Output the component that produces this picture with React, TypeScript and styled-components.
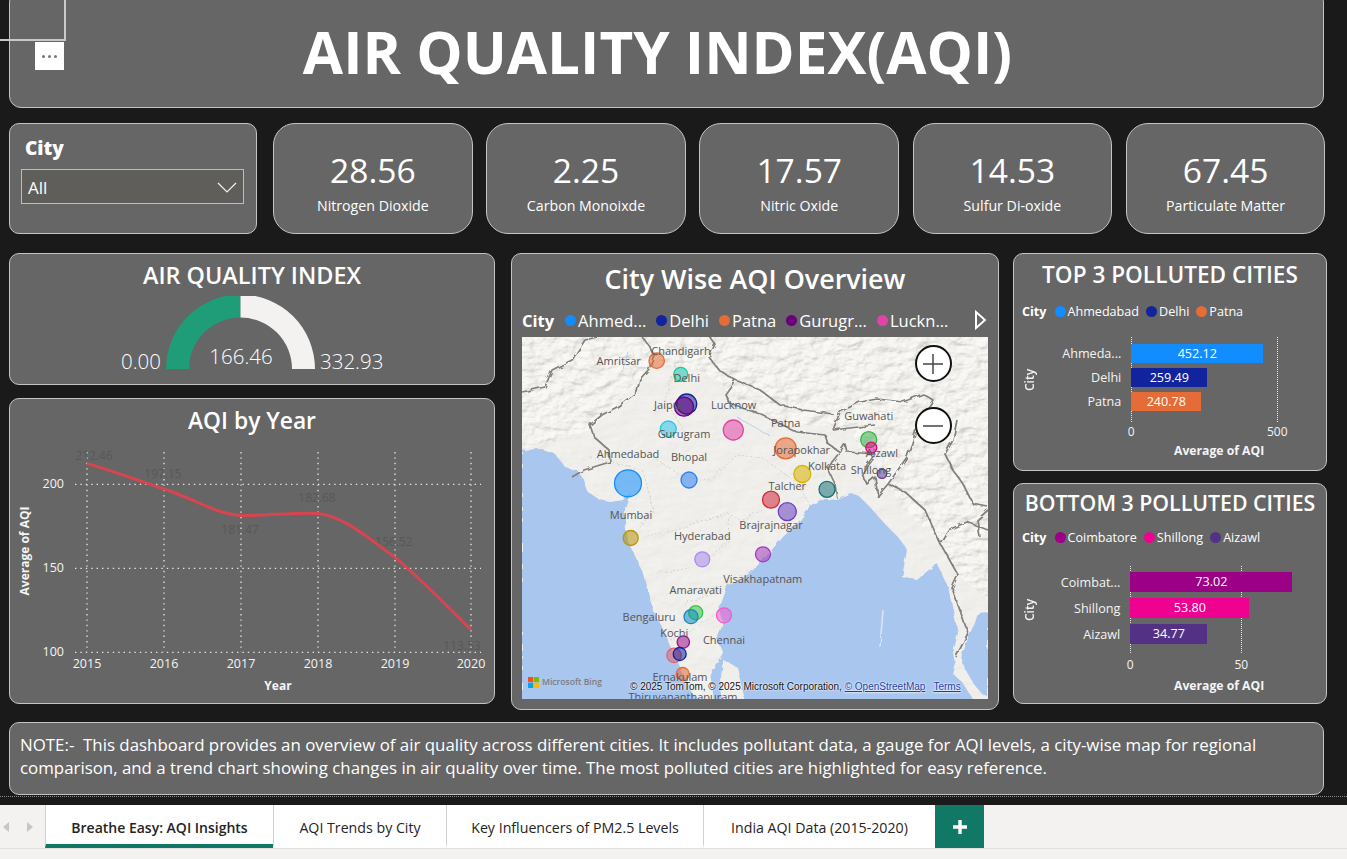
import styled, { createGlobalStyle } from 'styled-components';

const GlobalStyle = createGlobalStyle`
  html, body { margin: 0; padding: 0; background: #1a1a1a; }
  body { font-family: "Open Sans", "Noto Sans", sans-serif; color: #fff; overflow: hidden; }
  * { box-sizing: border-box; }
`;

const Page = styled.div`
  width: 1347px;
  height: 859px;
  display: flex;
  flex-direction: column;
  overflow: hidden;
  position: relative;
`;

const Canvas = styled.div`
  height: 805px;
  padding: 0 0 0 9px;
  display: flex;
  flex-direction: column;
`;

const Panel = styled.div<{ $radius?: number }>`
  background: #666;
  border: 1px solid #c4c4c4;
  border-radius: ${({ $radius }) => $radius ?? 10}px;
`;

const Header = styled(Panel)`
  width: 1315px;
  height: 118px;
  margin-top: -10px;
  padding: 6px 18px 0 0;
  display: flex;
  align-items: center;
  justify-content: center;
  border-radius: 12px;
`;

const MainTitle = styled.h1`
  margin: 0;
  font-size: 58.4px;
  font-weight: 700;
  line-height: 1;
`;

const FocusBox = styled.div`
  position: absolute;
  left: -2px;
  top: -2px;
  width: 68px;
  height: 43px;
  border: 2px solid #c9c9c9;
`;

const MoreButton = styled.div`
  position: absolute;
  left: 35px;
  top: 42px;
  width: 29px;
  height: 28px;
  background: #fff;
  display: flex;
  align-items: center;
  justify-content: center;
  gap: 3px;
`;

const MoreDot = styled.span`
  width: 3px;
  height: 3px;
  border-radius: 50%;
  background: #777;
`;

const StatRow = styled.div`
  display: flex;
  height: 111px;
  margin-top: 15px;
  gap: 13.5px;
`;

const Slicer = styled(Panel)`
  width: 248px;
  margin-right: 2.5px;
  padding: 11px 12px 11px 11px;
`;

const SlicerLabel = styled.div`
  font-size: 19px;
  font-weight: 800;
  line-height: 26px;
  padding-left: 4px;
`;

const SlicerSelect = styled.div`
  margin-top: 8px;
  height: 35px;
  background: #5f5e5b;
  border: 1px solid #bdbdbd;
  display: flex;
  align-items: center;
  justify-content: space-between;
  padding: 2px 6px 0 6px;
  font-size: 17px;
`;

const StatCard = styled(Panel)`
  width: 199.7px;
  border-radius: 22px;
  display: flex;
  flex-direction: column;
  align-items: center;
  padding-top: 24px;
`;

const StatValue = styled.div`
  font-size: 33.6px;
  line-height: 44px;
  font-weight: 400;
`;

const StatLabel = styled.div`
  font-size: 14.2px;
  line-height: 20px;
  margin-top: 4px;
`;

const MainRow = styled.div`
  display: flex;
  height: 457px;
  margin-top: 19px;
`;

const Column = styled.div<{ $width: number; $gap: number; $after: number }>`
  width: ${({ $width }) => $width}px;
  margin-right: ${({ $after }) => $after}px;
  display: flex;
  flex-direction: column;
  gap: ${({ $gap }) => $gap}px;
`;

const ChartPanel = styled(Panel)<{ $height: number }>`
  height: ${({ $height }) => $height}px;
  display: flex;
  flex-direction: column;
  overflow: hidden;
`;

const PanelTitle = styled.div<{ $size: number; $height: number; $top?: number }>`
  font-size: ${({ $size }) => $size}px;
  line-height: ${({ $height }) => $height}px;
  margin-top: ${({ $top }) => $top ?? 0}px;
  font-weight: 600;
  text-align: center;
  white-space: nowrap;
`;

const ChartSvg = styled.svg`
  display: block;
  flex: none;
`;

const AxisText = styled.text`
  font-family: "Open Sans", sans-serif;
  font-size: 12.5px;
  fill: #f4f4f4;
`;

const AxisName = styled.text`
  font-family: "Open Sans", sans-serif;
  font-size: 12px;
  font-weight: 700;
  fill: #f4f4f4;
`;

const GhostLabel = styled.text`
  font-family: "Open Sans", sans-serif;
  font-size: 12px;
  fill: #585858;
`;

const GaugeText = styled.text`
  font-family: "Open Sans", sans-serif;
  font-size: 20.5px;
  font-weight: 300;
  fill: #fff;
`;

const MapLegend = styled.div`
  display: flex;
  align-items: center;
  height: 26px;
  margin: 8px 0 4px 10px;
  font-size: 16.5px;
  white-space: nowrap;
`;

const MapFrame = styled.div`
  width: 466px;
  height: 362px;
  margin-left: 10px;
  position: relative;
  overflow: hidden;
`;

const MapCanvas = styled.svg`
  display: block;
`;

const MapLabel = styled.text`
  font-family: "Open Sans", sans-serif;
  font-size: 11px;
  fill: #555;
  text-anchor: middle;
`;

const ZoomButton = styled.div<{ $top: number }>`
  position: absolute;
  left: 392.5px;
  top: ${({ $top }) => $top}px;
  width: 37px;
  height: 37px;
  border-radius: 50%;
  background: #fff;
  border: 2px solid #111;
  display: flex;
  align-items: center;
  justify-content: center;
`;

const BingMark = styled.div`
  position: absolute;
  left: 6px;
  bottom: 11px;
  display: flex;
  align-items: center;
  gap: 3px;
  font-size: 8.6px;
  font-weight: 600;
  color: #7c7c7c;
`;

const Copyright = styled.div`
  position: absolute;
  left: 108px;
  bottom: 7px;
  font-family: "Liberation Sans", sans-serif;
  font-size: 10px;
  color: #111;
  white-space: nowrap;
  text-shadow: 0 0 2px #fff, 0 0 2px #fff;
`;

const MapLink = styled.span<{ $left?: number }>`
  color: #1b3fa8;
  text-decoration: underline;
  margin-left: ${({ $left }) => $left ?? 0}px;
`;

const LegendRow = styled.div<{ $top: number }>`
  display: flex;
  align-items: center;
  height: 18px;
  margin: ${({ $top }) => $top}px 0 0 8px;
  font-size: 12.6px;
  white-space: nowrap;
`;

const LegendName = styled.span<{ $mr: number }>`
  font-weight: 700;
  margin-right: ${({ $mr }) => $mr}px;
`;

const LegendDot = styled.span<{ $color: string; $size: number; $ml?: number }>`
  width: ${({ $size }) => $size}px;
  height: ${({ $size }) => $size}px;
  border-radius: 50%;
  background: ${({ $color }) => $color};
  margin-right: 2px;
  margin-left: ${({ $ml }) => $ml ?? 0}px;
  flex: none;
`;

const BarLayout = styled.div<{ $top: number; $plotHeight: number; $labelCol: number }>`
  display: grid;
  grid-template-columns: 16px ${({ $labelCol }) => $labelCol}px 1fr;
  grid-template-rows: ${({ $plotHeight }) => $plotHeight}px;
  margin: ${({ $top }) => $top}px 0 0 7px;
`;

const YName = styled.div`
  writing-mode: vertical-rl;
  transform: rotate(180deg);
  margin-right: 2px;
  font-size: 12px;
  font-weight: 600;
  text-align: center;
  color: #f4f4f4;
`;

const BarLabels = styled.div<{ $pt: number; $pitch: number }>`
  display: flex;
  flex-direction: column;
  align-items: flex-end;
  padding: ${({ $pt }) => $pt}px 10px 0 0;
  font-size: 12.6px;
  color: #f4f4f4;
  & > div { height: ${({ $pitch }) => $pitch}px; line-height: ${({ $pitch }) => $pitch - 5}px; }
`;

const Plot = styled.div<{ $pt: number; $gap: number }>`
  position: relative;
  display: flex;
  flex-direction: column;
  gap: ${({ $gap }) => $gap}px;
  padding-top: ${({ $pt }) => $pt}px;
`;

const GridLine = styled.div<{ $left: number }>`
  position: absolute;
  top: 0;
  bottom: 0;
  left: ${({ $left }) => $left}px;
  border-left: 1px dotted #e8e8e8;
`;

const Bar = styled.div<{ $color: string; $h: number }>`
  position: relative;
  height: ${({ $h }) => $h}px;
  background: ${({ $color }) => $color};
  font-size: 12.6px;
  line-height: ${({ $h }) => $h}px;
  text-align: center;
`;

const TickRow = styled.div<{ $left: number; $top: number; $gap: number }>`
  display: flex;
  gap: ${({ $gap }) => $gap}px;
  margin: ${({ $top }) => $top}px 0 0 ${({ $left }) => $left}px;
  font-size: 12px;
  line-height: 18px;
  color: #f4f4f4;
`;

const Tick = styled.div`
  width: 40px;
  text-align: center;
`;

const BarAxisName = styled.div<{ $top: number }>`
  margin: ${({ $top }) => $top}px 0 0 160px;
  font-size: 12.2px;
  font-weight: 700;
  line-height: 18px;
  color: #f4f4f4;
`;

const NotePanel = styled(Panel)`
  width: 1315px;
  height: 73px;
  margin-top: 12px;
  padding: 10px 10px;
  font-size: 16.87px;
  line-height: 23px;
  white-space: pre-wrap;
`;

const DottedLine = styled.div`
  margin: 1px 0 0 -9px;
  border-top: 1px dotted #8c8c8c;
`;

const TabBar = styled.div`
  flex: 1;
  background: #f3f2f1;
  display: flex;
  flex-direction: column;
`;

const TabStrip = styled.div`
  height: 44px;
  display: flex;
  border-bottom: 1px solid #e1dfdd;
`;

const TabNav = styled.div`
  width: 45px;
  display: flex;
  align-items: center;
  justify-content: space-between;
  padding: 0 11px 0 2px;
`;

const Tab = styled.div<{ $width: number; $active?: boolean }>`
  width: ${({ $width }) => $width}px;
  background: #fff;
  border-left: 1px solid #d2d0ce;
  border-bottom: 4px solid ${({ $active }) => ($active ? '#117865' : '#fff')};
  display: flex;
  align-items: center;
  justify-content: center;
  padding-top: 5px;
  font-size: ${({ $active }) => ($active ? 14 : 14.2)}px;
  font-weight: ${({ $active }) => ($active ? 600 : 400)};
  color: #252423;
  white-space: nowrap;
`;

const AddTab = styled.div`
  width: 49px;
  background: #117865;
  display: flex;
  align-items: center;
  justify-content: center;
`;

const mapLegend = [
  { name: 'Ahmed...', color: '#118dff', ml: 0 },
  { name: 'Delhi', color: '#12239e', ml: 10 },
  { name: 'Patna', color: '#e66c37', ml: 10 },
  { name: 'Gurugr...', color: '#6b007b', ml: 10 },
  { name: 'Luckn...', color: '#e044a7', ml: 10 },
];

const bubbles = [
  { x: 656.7, y: 360.7, r: 7.7, c: '#e66c37' },
  { x: 680.7, y: 374.3, r: 7, c: '#1ac9a8' },
  { x: 686.7, y: 404, r: 10, c: '#12239e' },
  { x: 684, y: 406.7, r: 9.5, c: '#6b007b' },
  { x: 668.3, y: 429, r: 8, c: '#2bc4e8' },
  { x: 733.3, y: 430, r: 10, c: '#e044a7' },
  { x: 785.7, y: 448.3, r: 10.5, c: '#e66c37' },
  { x: 802.3, y: 474, r: 8.5, c: '#d9b300' },
  { x: 868.7, y: 439.7, r: 8, c: '#37b34a' },
  { x: 871.3, y: 447.7, r: 5.5, c: '#e6007e' },
  { x: 882, y: 473.7, r: 4.7, c: '#5b3a8e' },
  { x: 628, y: 483.3, r: 13.5, c: '#118dff' },
  { x: 689, y: 480, r: 8, c: '#2a80f0' },
  { x: 827, y: 489.3, r: 8, c: '#197278' },
  { x: 771, y: 499.7, r: 8.5, c: '#d1283c' },
  { x: 787.3, y: 511.7, r: 9, c: '#6a3fc0' },
  { x: 630.7, y: 538, r: 7.5, c: '#b8960c' },
  { x: 702.3, y: 559.3, r: 7.5, c: '#a78bf0' },
  { x: 763, y: 554.3, r: 7.5, c: '#a33bb8' },
  { x: 695.7, y: 612.7, r: 7, c: '#37c44a' },
  { x: 691, y: 616.7, r: 7, c: '#118dbf' },
  { x: 724, y: 615.3, r: 7.5, c: '#f05ccc' },
  { x: 683.3, y: 642, r: 6.2, c: '#9b0e8c' },
  { x: 674, y: 655.3, r: 7.2, c: '#e8606c' },
  { x: 679.7, y: 654, r: 6.5, c: '#12239e' },
  { x: 682.7, y: 674, r: 6.5, c: '#e66c37' },
];

const cityLabels = [
  { t: 'Amritsar', x: 618.7, y: 365 },
  { t: 'Chandigarh', x: 681, y: 354.7 },
  { t: 'Delhi', x: 686.7, y: 382 },
  { t: 'Jaipur', x: 669, y: 408.7 },
  { t: 'Lucknow', x: 733.7, y: 408.7 },
  { t: 'Patna', x: 785.7, y: 427 },
  { t: 'Guwahati', x: 868.7, y: 419.7 },
  { t: 'Gurugram', x: 684, y: 438 },
  { t: 'Ahmedabad', x: 628, y: 458 },
  { t: 'Bhopal', x: 689, y: 460.7 },
  { t: 'Jorapokhar', x: 801.7, y: 454 },
  { t: 'Aizawl', x: 882, y: 457 },
  { t: 'Kolkata', x: 827, y: 470 },
  { t: 'Shillong', x: 871, y: 473.7 },
  { t: 'Talcher', x: 787.3, y: 490 },
  { t: 'Mumbai', x: 631, y: 518.7 },
  { t: 'Brajrajnagar', x: 771, y: 529 },
  { t: 'Hyderabad', x: 702.3, y: 540 },
  { t: 'Visakhapatnam', x: 762.7, y: 583 },
  { t: 'Amaravati', x: 695.7, y: 594 },
  { t: 'Bengaluru', x: 649, y: 620.7 },
  { t: 'Kochi', x: 674.3, y: 636.7 },
  { t: 'Chennai', x: 724, y: 644 },
  { t: 'Ernakulam', x: 680, y: 681.3 },
  { t: 'Thiruvananthapuram', x: 683, y: 700.7 },
];

// map outlines traced from the screenshot, in page coordinates
const seaPath =
  'M522 450 L542 449 L555 454 L565 467 L577 470 L584 480 L588 492 L600 500 L610 502 L623 500 L631 492 L625 507 L625 520 L627 540 L642 570 L653 610 L668 640 L680 667 L692 693 L697 700 L714 700 L710 673 L723 653 L717 640 L723 623 L719 610 L727 587 L750 573 L763 560 L783 537 L797 524 L810 507 L825 499 L837 500 L852 494 L860 497 L870 507 L885 524 L898 537 L907 550 L902 577 L917 580 L937 563 L943 575 L948 587 L953 610 L958 633 L953 653 L955 663 L952 673 L963 683 L973 700 L522 700 Z';
const eastSeaPath = 'M988 612 L978 613 L975 623 L969 635 L963 653 L962 663 L973 683 L983 695 L988 697 Z';
const lankaPath = 'M723 660 L737 667 L745 700 L722 700 L721 677 Z';
const hillsPath =
  'M522 337 L988 337 L988 600 L958 575 L940 543 L900 505 L885 480 L860 450 L850 428 L800 425 L760 412 L730 395 L705 372 L650 360 L640 380 L610 412 L590 430 L560 440 L522 450 Z';
const borders = [
  'M597 337 L585 340 L572 360 L552 370 L545 387 L522 392',
  'M642 337 L650 347 L654 355 L649 369 L640 379 L637 392 L617 407 L602 415 L590 425 L594 437 L609 450 L610 462 L600 465 L584 470 L572 477',
  'M710 337 L715 344 L709 357 L719 370 L735 380 L725 394 L730 404 L760 414 L797 432 L825 435 L827 437',
  'M735 380 L760 390 L780 405 L803 410 L833 414',
  'M833 430 L840 412 L860 402 L877 399 L903 402 L923 394 L933 400 L918 423 L913 440 L907 457 L893 477 L888 484 L877 497',
  'M833 430 L875 425',
  'M825 435 L828 444 L840 452 L845 444 L847 452 L875 454 L867 465 L862 474 L867 484 L875 477 L878 497',
  'M840 452 L832 462 L828 469 L835 484 L837 499',
  'M957 420 L953 440 L945 454 L953 470 L963 484 L973 504 L988 507',
  'M988 510 L977 520 L980 537',
  'M940 543 L948 530 L967 522 L988 530',
  'M940 543 L958 575 L952 588 L968 633 L956 657',
  'M888 484 L905 492 L925 510 L940 543',
];
const stateLines = [
  'M650 455 L680 475 L710 480 L737 455 L763 458 L797 483 L810 505',
  'M643 537 L683 527 L727 513 L740 520 L763 510',
  'M657 573 L697 567 L727 543 L730 517',
  'M683 603 L717 593 L750 570',
  'M670 640 L697 627 L717 613',
  'M590 457 L643 470 L653 510 L640 527',
  'M675 365 L665 400 L690 440',
];

type BarRow = { label: string; value: string; width: number; color: string };

const top3: BarRow[] = [
  { label: 'Ahmeda...', value: '452.12', width: 132, color: '#118dff' },
  { label: 'Delhi', value: '259.49', width: 76, color: '#12239e' },
  { label: 'Patna', value: '240.78', width: 70, color: '#e66c37' },
];

const bottom3: BarRow[] = [
  { label: 'Coimbat...', value: '73.02', width: 162, color: '#9b0086' },
  { label: 'Shillong', value: '53.80', width: 119, color: '#ee0090' },
  { label: 'Aizawl', value: '34.77', width: 77, color: '#533285' },
];

const stats = [
  { value: '28.56', label: 'Nitrogen Dioxide' },
  { value: '2.25', label: 'Carbon Monoixde' },
  { value: '17.57', label: 'Nitric Oxide' },
  { value: '14.53', label: 'Sulfur Di-oxide' },
  { value: '67.45', label: 'Particulate Matter' },
];

const tabs = [
  { name: 'Breathe Easy: AQI Insights', width: 228, active: true },
  { name: 'AQI Trends by City', width: 173 },
  { name: 'Key Influencers of PM2.5 Levels', width: 257 },
  { name: 'India AQI Data (2015-2020)', width: 232 },
];

const years = [
  { year: '2015', x: 87 },
  { year: '2016', x: 164 },
  { year: '2017', x: 241 },
  { year: '2018', x: 318 },
  { year: '2019', x: 395 },
  { year: '2020', x: 471 },
];

const ghostLabels = [
  { t: '212.46', x: 94, y: 460 },
  { t: '197.15', x: 163, y: 478 },
  { t: '181.47', x: 240, y: 534 },
  { t: '182.68', x: 317, y: 502 },
  { t: '156.52', x: 394, y: 546 },
  { t: '113.53', x: 462, y: 650 },
];

function MapBase() {
  return (
    <MapCanvas width="466" height="362" viewBox="522 337 466 362">
      <defs>
        <filter id="hills" x="0" y="0" width="100%" height="100%">
          <feTurbulence type="fractalNoise" baseFrequency="0.06 0.1" numOctaves="4" seed="11" result="noise" />
          <feDiffuseLighting in="noise" surfaceScale="2.6" diffuseConstant="1.04" lightingColor="#f6f5f1">
            <feDistantLight azimuth="225" elevation="70" />
          </feDiffuseLighting>
          <feComposite in2="SourceAlpha" operator="in" />
        </filter>
        <filter id="plains" x="0" y="0" width="100%" height="100%">
          <feTurbulence type="fractalNoise" baseFrequency="0.05 0.08" numOctaves="3" seed="4" result="noise" />
          <feDiffuseLighting in="noise" surfaceScale="0.8" diffuseConstant="1.03" lightingColor="#f2f1ed">
            <feDistantLight azimuth="225" elevation="72" />
          </feDiffuseLighting>
          <feComposite in2="SourceAlpha" operator="in" />
        </filter>
        <filter id="rough" x="-5%" y="-5%" width="110%" height="110%">
          <feTurbulence type="fractalNoise" baseFrequency="0.12" numOctaves="2" seed="3" result="jag" />
          <feDisplacementMap in="SourceGraphic" in2="jag" scale="5" result="moved" />
          <feGaussianBlur in="moved" stdDeviation="0.4" />
        </filter>
      </defs>
      <rect x="522" y="337" width="466" height="362" fill="#000" filter="url(#plains)" />
      <path d={hillsPath} fill="#000" filter="url(#hills)" />
      <g filter="url(#rough)">
        <path d={seaPath} fill="#a9c6ef" />
        <path d={eastSeaPath} fill="#a9c6ef" />
        <path d={lankaPath} fill="#efeeea" />
        <path d="M883 610 L880 647" stroke="#dfe6ee" strokeWidth="1.5" fill="none" />
      </g>
      <g fill="none" filter="url(#rough)">
        {stateLines.map((d) => (
          <path key={d} d={d} stroke="#d4d2cb" strokeWidth="1" strokeDasharray="2 2" />
        ))}
        {borders.map((d) => (
          <path key={d} d={d} stroke="#81807b" strokeWidth="1.7" strokeLinejoin="round" />
        ))}
        <path d="M628 352 L622 372 M737 417 L770 436" stroke="#b9cde8" strokeWidth="1" />
      </g>
      {bubbles.map((b) => (
        <circle
          key={`${b.x}-${b.y}`}
          cx={b.x}
          cy={b.y}
          r={b.r}
          fill={b.c}
          fillOpacity="0.55"
          stroke={b.c}
          strokeWidth="1.3"
        />
      ))}
      {cityLabels.map((l) => (
        <MapLabel key={l.t} x={l.x} y={l.y}>
          {l.t}
        </MapLabel>
      ))}
    </MapCanvas>
  );
}

function BarChart({
  rows,
  legend,
  labelCol,
  plotHeight,
  plotTop,
  chartTop,
  barHeight,
  barGap,
  gridX,
  ticks,
  tickTop,
  axisTop,
}: {
  rows: BarRow[];
  legend: { name: string; color: string }[];
  labelCol: number;
  plotHeight: number;
  plotTop: number;
  chartTop: number;
  barHeight: number;
  barGap: number;
  gridX: number;
  ticks: string[];
  tickTop: number;
  axisTop: number;
}) {
  return (
    <>
      <LegendRow $top={6}>
        <LegendName $mr={8}>City</LegendName>
        {legend.map((l, i) => (
          <span key={l.name} style={{ display: 'contents' }}>
            <LegendDot $color={l.color} $size={11} $ml={i === 0 ? 0 : 7} />
            {l.name}
          </span>
        ))}
      </LegendRow>
      <BarLayout $top={chartTop} $plotHeight={plotHeight} $labelCol={labelCol}>
        <YName>City</YName>
        <BarLabels $pt={plotTop} $pitch={barHeight + barGap}>
          {rows.map((r) => (
            <div key={r.label}>{r.label}</div>
          ))}
        </BarLabels>
        <Plot $pt={plotTop} $gap={barGap}>
          <GridLine $left={0} />
          <GridLine $left={gridX} />
          {rows.map((r) => (
            <Bar key={r.label} $color={r.color} $h={barHeight} style={{ width: r.width }}>
              {r.value}
            </Bar>
          ))}
        </Plot>
      </BarLayout>
      <TickRow $left={3 + labelCol} $top={tickTop} $gap={gridX - 40}>
        <Tick>{ticks[0]}</Tick>
        <Tick>{ticks[1]}</Tick>
      </TickRow>
      <BarAxisName $top={axisTop}>Average of AQI</BarAxisName>
    </>
  );
}

export default function App() {
  return (
    <Page>
      <GlobalStyle />
      <Canvas>
        <Header>
          <MainTitle>AIR QUALITY INDEX(AQI)</MainTitle>
        </Header>
        <StatRow>
          <Slicer>
            <SlicerLabel>City</SlicerLabel>
            <SlicerSelect>
              All
              <svg width="20" height="12" viewBox="0 0 20 12">
                <polyline points="1,1 10,10 19,1" fill="none" stroke="#f2f2f2" strokeWidth="1.2" />
              </svg>
            </SlicerSelect>
          </Slicer>
          {stats.map((s) => (
            <StatCard key={s.label}>
              <StatValue>{s.value}</StatValue>
              <StatLabel>{s.label}</StatLabel>
            </StatCard>
          ))}
        </StatRow>
        <MainRow>
          <Column $width={486} $gap={13} $after={16}>
            <ChartPanel $height={132}>
              <PanelTitle $size={23.4} $height={42}>AIR QUALITY INDEX</PanelTitle>
              <ChartSvg width="484" height="88" viewBox="10 296 484 88">
                <path d="M166 369 A74.5 74.5 0 0 1 240.5 294.5 L240.5 317.5 A51.5 51.5 0 0 0 189 369 Z" fill="#1f9c78" />
                <path d="M240.5 294.5 A74.5 74.5 0 0 1 315 369 L292 369 A51.5 51.5 0 0 0 240.5 317.5 Z" fill="#f3f2f1" />
                <GaugeText x="161" y="369" textAnchor="end">0.00</GaugeText>
                <GaugeText x="320" y="369">332.93</GaugeText>
                <GaugeText x="241" y="364" textAnchor="middle">166.46</GaugeText>
              </ChartSvg>
            </ChartPanel>
            <ChartPanel $height={306}>
              <PanelTitle $size={22.8} $height={43}>AQI by Year</PanelTitle>
              <ChartSvg width="484" height="261" viewBox="10 442 484 261">
                <g stroke="#e6e6e6" strokeWidth="1.3" strokeDasharray="1.4 4" fill="none">
                  {[484.3, 568.3, 652.3].map((y) => (
                    <line key={y} x1="75" x2="481" y1={y} y2={y} />
                  ))}
                  {years.map((y) => (
                    <line key={y.year} x1={y.x} x2={y.x} y1="452" y2="652" />
                  ))}
                </g>
                {ghostLabels.map((g) => (
                  <GhostLabel key={g.t} x={g.x} y={g.y} textAnchor="middle">{g.t}</GhostLabel>
                ))}
                <path
                  d="M87 463.4 C115 472 140 481 164 489 C195 499 215 514 241 515.4 C265 516 295 512 318 513.4 C345 516 370 540 395 557.3 C420 578 445 604 471 629.6"
                  fill="none"
                  stroke="#d64550"
                  strokeWidth="3"
                />
                {[{ v: '200', y: 488 }, { v: '150', y: 572 }, { v: '100', y: 656 }].map((t) => (
                  <AxisText key={t.v} x="64" y={t.y} textAnchor="end">{t.v}</AxisText>
                ))}
                {years.map((y) => (
                  <AxisText key={y.year} x={y.x} y="668" textAnchor="middle">{y.year}</AxisText>
                ))}
                <AxisName x="278" y="689.5" textAnchor="middle">Year</AxisName>
                <AxisName x="0" y="0" textAnchor="middle" transform="translate(29 551) rotate(-90)">Average of AQI</AxisName>
              </ChartSvg>
            </ChartPanel>
          </Column>
          <Column $width={488} $gap={0} $after={14}>
            <ChartPanel $height={457}>
              <PanelTitle $size={26.9} $height={40} $top={5}>City Wise AQI Overview</PanelTitle>
              <MapLegend>
                <LegendName $mr={11}>City</LegendName>
                {mapLegend.map((l) => (
                  <span key={l.name} style={{ display: 'contents' }}>
                    <LegendDot $color={l.color} $size={11} $ml={l.ml} />
                    {l.name}
                  </span>
                ))}
                <svg width="14" height="20" viewBox="0 0 14 20" style={{ marginLeft: 26 }}>
                  <polygon points="2,2 11,10 2,18" fill="none" stroke="#fff" strokeWidth="2" />
                </svg>
              </MapLegend>
              <MapFrame>
                <MapBase />
                <ZoomButton $top={8}>
                  <svg width="20" height="20" viewBox="0 0 20 20">
                    <path d="M0 10 H20 M10 0 V20" stroke="#444" strokeWidth="1.5" />
                  </svg>
                </ZoomButton>
                <ZoomButton $top={70}>
                  <svg width="20" height="20" viewBox="0 0 20 20">
                    <path d="M0 10 H20" stroke="#444" strokeWidth="1.5" />
                  </svg>
                </ZoomButton>
                <BingMark>
                  <svg width="11" height="11" viewBox="0 0 11 11">
                    <rect width="5.2" height="5.2" fill="#f25022" />
                    <rect x="5.8" width="5.2" height="5.2" fill="#7fba00" />
                    <rect y="5.8" width="5.2" height="5.2" fill="#00a4ef" />
                    <rect x="5.8" y="5.8" width="5.2" height="5.2" fill="#ffb900" />
                  </svg>
                  Microsoft Bing
                </BingMark>
                <Copyright>
                  © 2025 TomTom, © 2025 Microsoft Corporation, <MapLink>© OpenStreetMap</MapLink>
                  <MapLink $left={8}>Terms</MapLink>
                </Copyright>
              </MapFrame>
            </ChartPanel>
          </Column>
          <Column $width={314} $gap={12} $after={0}>
            <ChartPanel $height={218}>
              <PanelTitle $size={22.6} $height={42}>TOP 3 POLLUTED CITIES</PanelTitle>
              <BarChart
                rows={top3}
                legend={[
                  { name: 'Ahmedabad', color: '#118dff' },
                  { name: 'Delhi', color: '#12239e' },
                  { name: 'Patna', color: '#e66c37' },
                ]}
                labelCol={94.3}
                plotHeight={85}
                plotTop={7}
                chartTop={17}
                barHeight={19}
                barGap={5}
                gridX={146}
                ticks={['0', '500']}
                tickTop={1}
                axisTop={1}
              />
            </ChartPanel>
            <ChartPanel $height={221}>
              <PanelTitle $size={21.3} $height={38}>BOTTOM 3 POLLUTED CITIES</PanelTitle>
              <BarChart
                rows={bottom3}
                legend={[
                  { name: 'Coimbatore', color: '#9b0086' },
                  { name: 'Shillong', color: '#ee0090' },
                  { name: 'Aizawl', color: '#533285' },
                ]}
                labelCol={93.3}
                plotHeight={87}
                plotTop={6}
                chartTop={20}
                barHeight={20}
                barGap={6}
                gridX={111}
                ticks={['0', '50']}
                tickTop={3}
                axisTop={3}
              />
            </ChartPanel>
          </Column>
        </MainRow>
        <NotePanel>
          {'NOTE:-  This dashboard provides an overview of air quality across different cities. It includes pollutant data, a gauge for AQI levels, a city-wise map for regional comparison, and a trend chart showing changes in air quality over time. The most polluted cities are highlighted for easy reference.'}
        </NotePanel>
        <DottedLine />
      </Canvas>
      <TabBar>
        <TabStrip>
          <TabNav>
            <svg width="7" height="12" viewBox="0 0 7 12"><polygon points="7,1 1,6 7,11" fill="#c8c6c4" /></svg>
            <svg width="7" height="12" viewBox="0 0 7 12"><polygon points="0,1 6,6 0,11" fill="#c8c6c4" /></svg>
          </TabNav>
          {tabs.map((t) => (
            <Tab key={t.name} $width={t.width} $active={t.active}>{t.name}</Tab>
          ))}
          <AddTab>
            <svg width="14" height="14" viewBox="0 0 14 14">
              <path d="M7 0 V14 M0 7 H14" stroke="#fff" strokeWidth="3.4" />
            </svg>
          </AddTab>
        </TabStrip>
      </TabBar>
      <FocusBox />
      <MoreButton>
        <MoreDot />
        <MoreDot />
        <MoreDot />
      </MoreButton>
    </Page>
  );
}
